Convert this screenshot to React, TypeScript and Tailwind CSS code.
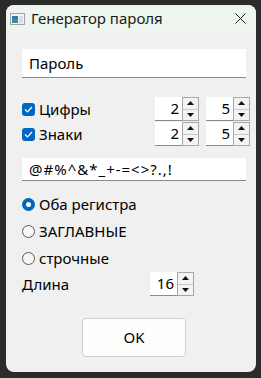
import { useState } from 'react'

const font = { fontFamily: '"Noto Sans", "Open Sans", sans-serif' }

function Spin({ value }: { value: string }) {
  return (
    <div className="flex h-[24px] w-[44px]">
      <div className="flex flex-1 items-center justify-end bg-white pr-[3px] text-[15px] text-black border-b border-[#8a8a8a]">
        {value}
      </div>
      <div className="flex w-[17px] flex-col border border-[#a8a8a8] bg-[#f3f3f3]">
        <div className="flex flex-1 items-center justify-center border-b border-[#c8c8c8]">
          <svg width="7" height="4" viewBox="0 0 7 4">
            <path d="M0 4 L3.5 0 L7 4 Z" fill="#111" />
          </svg>
        </div>
        <div className="flex flex-1 items-center justify-center">
          <svg width="7" height="4" viewBox="0 0 7 4">
            <path d="M0 0 L3.5 4 L7 0 Z" fill="#111" />
          </svg>
        </div>
      </div>
    </div>
  )
}

function Check({ label }: { label: string }) {
  return (
    <div className="flex items-center gap-[4px]">
      <div className="flex h-[13px] w-[13px] items-center justify-center rounded-[3px] bg-[#0067c0]">
        <svg width="9" height="7" viewBox="0 0 9 7">
          <path d="M1 3.5 L3.5 6 L8 1" stroke="white" strokeWidth="1.2" fill="none" />
        </svg>
      </div>
      <span className="text-[15px] text-black">{label}</span>
    </div>
  )
}

function Radio({ label, checked }: { label: string; checked?: boolean }) {
  return (
    <div className="flex items-center gap-[4px]">
      {checked ? (
        <div className="flex h-[13px] w-[13px] items-center justify-center rounded-full bg-[#0067c0]">
          <div className="h-[5px] w-[5px] rounded-full bg-white" />
        </div>
      ) : (
        <div className="h-[13px] w-[13px] rounded-full border border-[#5a5a5a] bg-[#f7f7f7]" />
      )}
      <span className="text-[15px] text-black">{label}</span>
    </div>
  )
}

export default function App() {
  const [pw] = useState('Пароль')
  return (
    <div className="h-[378px] w-[261px] bg-[#2b2b2b] pl-[6px] pt-[5px]" style={font}>
      <div className="flex h-[367px] w-[250px] flex-col overflow-hidden rounded-[8px] bg-[#f0f0f0]">
        {/* title bar */}
        <div className="flex h-[27px] items-center bg-[#eef4ee] pl-[4px] pr-[10px]">
          <svg width="15" height="12" viewBox="0 0 15 12" className="mr-[6px]">
            <rect x="0.5" y="0.5" width="14" height="11" fill="#f4f4f4" stroke="#9aa4ac" />
            <rect x="2" y="3" width="6" height="7" fill="#3f8f8a" />
            <rect x="2" y="3" width="6" height="3" fill="#3a73b8" />
            <rect x="9" y="3" width="4" height="7" fill="#d8dde2" />
          </svg>
          <span className="flex-1 text-[15px] text-[#1a1a1a]">Генератор пароля</span>
          <svg width="11" height="11" viewBox="0 0 11 11">
            <path d="M0.5 0.5 L10.5 10.5 M10.5 0.5 L0.5 10.5" stroke="#222" strokeWidth="1" />
          </svg>
        </div>

        <div className="flex flex-col pl-[16px] pr-[10px]">
          <div className="mt-[17px] flex h-[29px] items-center border-b border-[#8a8a8a] bg-white pl-[7px] text-[15px] text-black">
            {pw}
          </div>

          <div className="mt-[19px] flex items-center">
            <div className="flex-1"><Check label="Цифры" /></div>
            <Spin value="2" />
            <div className="ml-[7px] -mr-[4px]"><Spin value="5" /></div>
          </div>
          <div className="mt-[1px] flex items-center">
            <div className="flex-1"><Check label="Знаки" /></div>
            <Spin value="2" />
            <div className="ml-[7px] -mr-[4px]"><Spin value="5" /></div>
          </div>

          <div className="mt-[12px] flex h-[23px] items-center border-b border-[#8a8a8a] bg-white pl-[7px] text-[15px] tracking-[1px] text-black">
            @#%^&amp;*_+-=&lt;&gt;?.,!
          </div>

          <div className="mt-[12px] flex flex-col gap-[5px]">
            <div className="h-[22px] flex items-center"><Radio label="Оба регистра" checked /></div>
            <div className="h-[22px] flex items-center"><Radio label="ЗАГЛАВНЫЕ" /></div>
            <div className="h-[22px] flex items-center"><Radio label="строчные" /></div>
          </div>

          <div className="mt-[3px] flex items-center">
            <span className="w-[128px] text-[15px] text-black">Длина</span>
            <Spin value="16" />
          </div>

          <div className="mt-[22px] flex justify-center">
            <button className="flex h-[39px] w-[104px] items-center justify-center rounded-[4px] border border-[#d0d0d0] bg-[#fdfdfd] text-[15px] text-black">
              OK
            </button>
          </div>
        </div>
      </div>
    </div>
  )
}
